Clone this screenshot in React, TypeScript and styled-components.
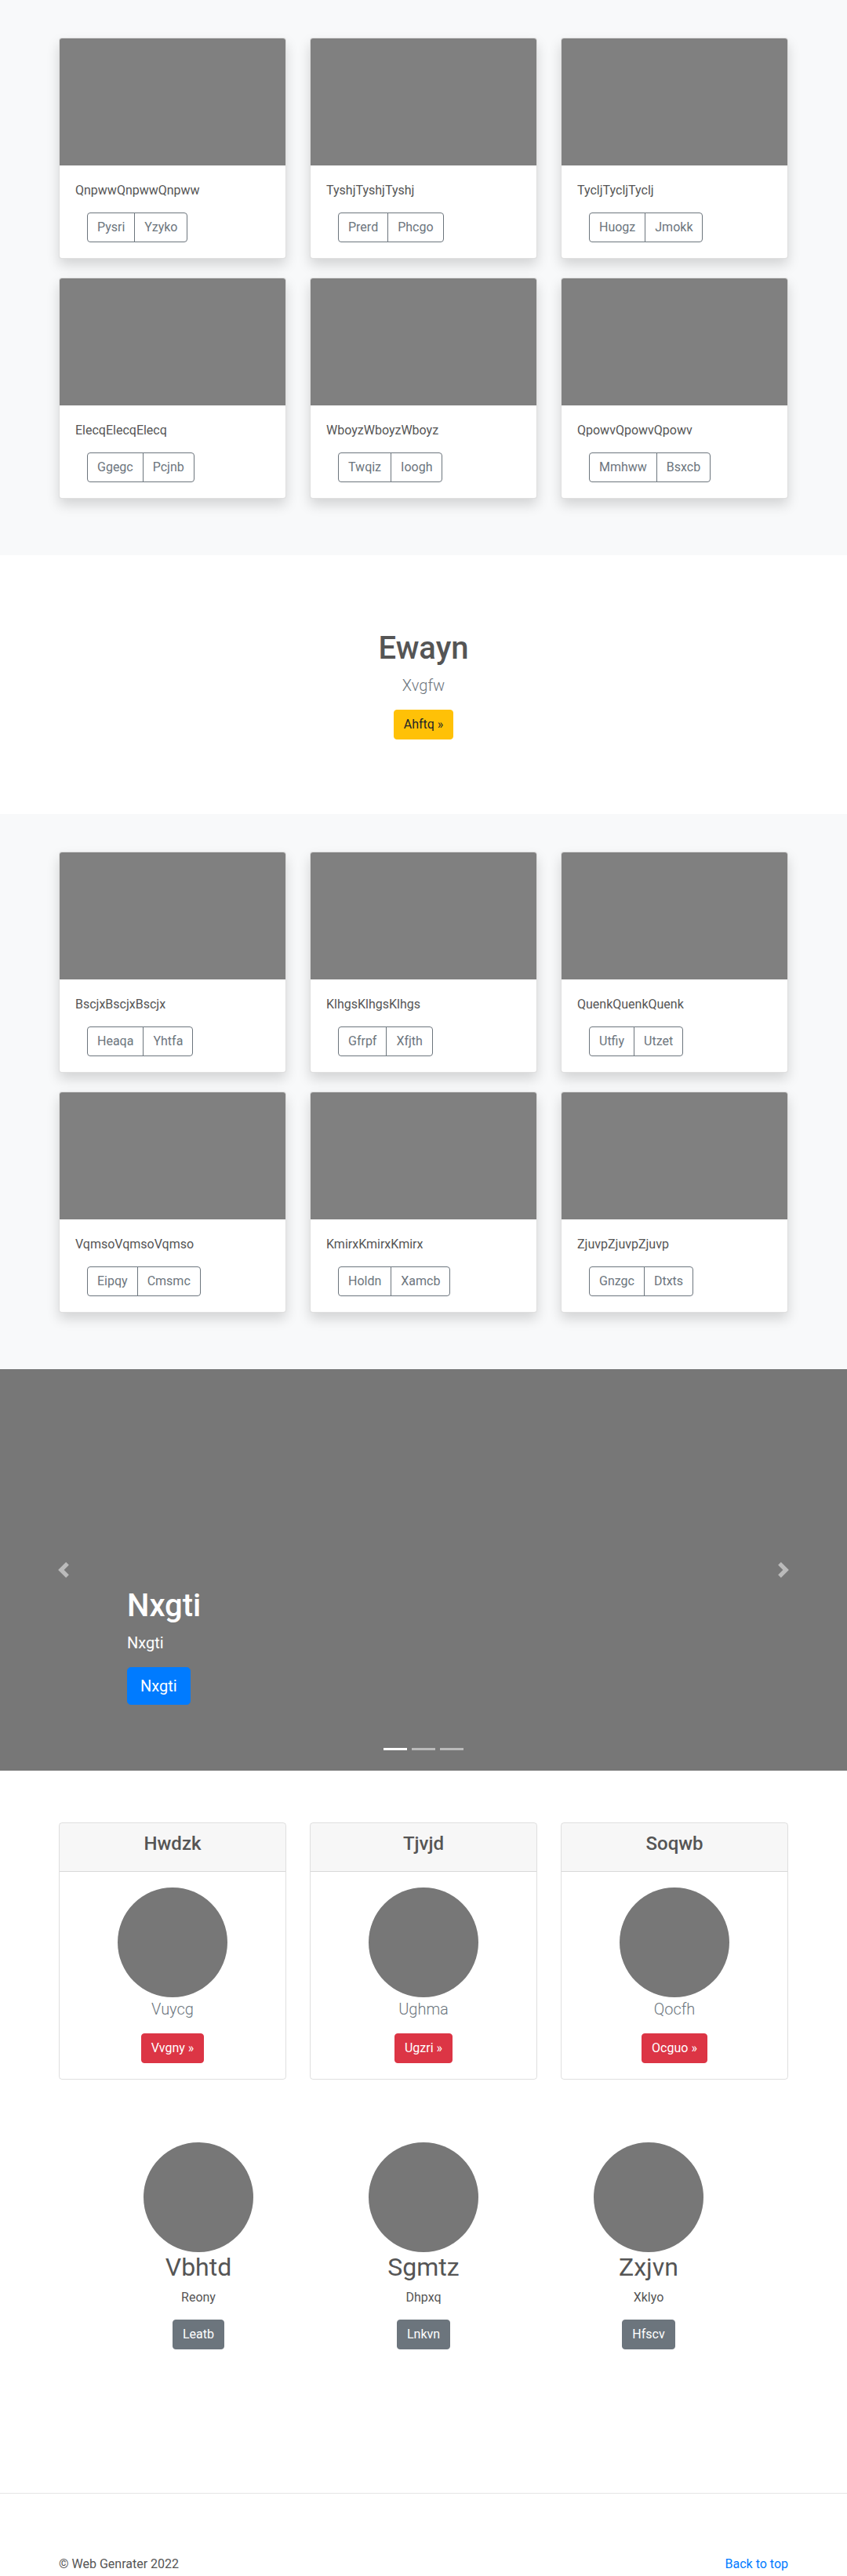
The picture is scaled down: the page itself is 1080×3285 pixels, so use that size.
import styled, { createGlobalStyle } from 'styled-components';

const GlobalStyle = createGlobalStyle`
  html, body {
    margin: 0;
    padding: 0;
  }
  body {
    font-family: Roboto, "Noto Sans", Arial, sans-serif;
    font-size: 16px;
    line-height: 1.5;
    color: #555;
    background: #fff;
  }
  * {
    box-sizing: border-box;
  }
`;

const albumOne = [
  { title: 'QnpwwQnpwwQnpww', a: 'Pysri', b: 'Yzyko' },
  { title: 'TyshjTyshjTyshj', a: 'Prerd', b: 'Phcgo' },
  { title: 'TycljTycljTyclj', a: 'Huogz', b: 'Jmokk' },
  { title: 'ElecqElecqElecq', a: 'Ggegc', b: 'Pcjnb' },
  { title: 'WboyzWboyzWboyz', a: 'Twqiz', b: 'Ioogh' },
  { title: 'QpowvQpowvQpowv', a: 'Mmhww', b: 'Bsxcb' },
];

const albumTwo = [
  { title: 'BscjxBscjxBscjx', a: 'Heaqa', b: 'Yhtfa' },
  { title: 'KlhgsKlhgsKlhgs', a: 'Gfrpf', b: 'Xfjth' },
  { title: 'QuenkQuenkQuenk', a: 'Utfiy', b: 'Utzet' },
  { title: 'VqmsoVqmsoVqmso', a: 'Eipqy', b: 'Cmsmc' },
  { title: 'KmirxKmirxKmirx', a: 'Holdn', b: 'Xamcb' },
  { title: 'ZjuvpZjuvpZjuvp', a: 'Gnzgc', b: 'Dtxts' },
];

const pricing = [
  { head: 'Hwdzk', text: 'Vuycg', cta: 'Vvgny' },
  { head: 'Tjvjd', text: 'Ughma', cta: 'Ugzri' },
  { head: 'Soqwb', text: 'Qocfh', cta: 'Ocguo' },
];

const people = [
  { name: 'Vbhtd', text: 'Reony', cta: 'Leatb' },
  { name: 'Sgmtz', text: 'Dhpxq', cta: 'Lnkvn' },
  { name: 'Zxjvn', text: 'Xklyo', cta: 'Hfscv' },
];

const Container = styled.div`
  width: 960px;
  margin: 0 auto;
  padding: 0 15px;
`;

const Album = styled.section`
  background: #f8f9fa;
  padding: 48px 0 72px;
`;

const Grid = styled.div`
  display: grid;
  grid-template-columns: repeat(3, 290px);
  column-gap: 30px;
  row-gap: 24px;
`;

const Card = styled.div`
  background: #fff;
  border: 1px solid rgba(0, 0, 0, 0.125);
  border-radius: 4px;
  overflow: hidden;
  box-shadow: 0 8px 16px rgba(0, 0, 0, 0.15);
`;

const Thumb = styled.div`
  height: 162px;
  background: #808080;
`;

const CardBody = styled.div`
  padding: 20px;
`;

const CardText = styled.p`
  margin: 0 0 16px;
  line-height: 24px;
`;

const BtnGroup = styled.div`
  display: inline-flex;
  margin-left: 15px;
`;

const OutlineBtn = styled.button`
  font: inherit;
  font-size: 16px;
  line-height: 24px;
  padding: 6px 12px;
  color: #6c757d;
  background: transparent;
  border: 1px solid #6c757d;
  border-radius: 0;
  &:first-child {
    border-radius: 4px 0 0 4px;
  }
  &:last-child {
    margin-left: -1px;
    border-radius: 0 4px 4px 0;
  }
`;

const Hero = styled.section`
  padding: 95px 0;
  text-align: center;
`;

const HeroTitle = styled.h1`
  margin: 0 0 8px;
  font-size: 40px;
  font-weight: 500;
  line-height: 1.2;
  color: #555;
`;

const Lead = styled.p`
  margin: 0 0 16px;
  font-size: 20px;
  font-weight: 300;
  line-height: 30px;
  color: #6c757d;
`;

const Btn = styled.a<{ $bg: string; $fg: string; $lg?: boolean }>`
  display: inline-block;
  font-size: ${(p) => (p.$lg ? '20px' : '16px')};
  line-height: ${(p) => (p.$lg ? '30px' : '24px')};
  padding: ${(p) => (p.$lg ? '8px 16px' : '6px 12px')};
  border: 1px solid ${(p) => p.$bg};
  border-radius: ${(p) => (p.$lg ? '4.8px' : '4px')};
  background: ${(p) => p.$bg};
  color: ${(p) => p.$fg};
  text-decoration: none;
`;

const Carousel = styled.div`
  position: relative;
  height: 512px;
  background: #777;
  overflow: hidden;
`;

const Caption = styled.div`
  position: absolute;
  left: 15%;
  right: 15%;
  bottom: 48px;
  padding: 20px 0;
  color: #fff;
  text-align: left;
`;

const CaptionTitle = styled.h1`
  margin: 0 0 8px;
  font-size: 40px;
  font-weight: 500;
  line-height: 1.2;
`;

const CaptionText = styled.p<{ $big?: boolean }>`
  margin: 0 0 16px;
  font-size: ${(p) => (p.$big ? '20px' : '16px')};
  line-height: ${(p) => (p.$big ? '30px' : '24px')};
`;

const Control = styled.span<{ $side: 'left' | 'right' }>`
  position: absolute;
  top: 0;
  bottom: 0;
  ${(p) => p.$side}: 0;
  width: 15%;
  display: flex;
  align-items: center;
  justify-content: center;
  opacity: 0.5;
`;

const Indicators = styled.ol`
  position: absolute;
  left: 0;
  right: 0;
  bottom: 0;
  margin: 0 0 16px;
  padding: 0;
  list-style: none;
  display: flex;
  justify-content: center;
`;

const Indicator = styled.li<{ $active?: boolean }>`
  width: 30px;
  height: 23px;
  margin: 0 3px;
  border-top: 10px solid transparent;
  border-bottom: 10px solid transparent;
  background: #fff;
  background-clip: padding-box;
  opacity: ${(p) => (p.$active ? 1 : 0.5)};
`;

const PricingWrap = styled.div`
  margin-top: 66px;
`;

const PriceCard = styled.div`
  border: 1px solid rgba(0, 0, 0, 0.125);
  border-radius: 4px;
  overflow: hidden;
  text-align: center;
`;

const PriceHead = styled.div`
  background: rgba(0, 0, 0, 0.03);
  border-bottom: 1px solid rgba(0, 0, 0, 0.125);
  padding: 12px 20px;
`;

const PriceTitle = styled.h4`
  margin: 0 0 8px;
  font-size: 24px;
  font-weight: 500;
  line-height: 1.2;
`;

const Circle = styled.div`
  width: 140px;
  height: 140px;
  border-radius: 50%;
  background: #777;
  margin: 0 auto;
`;

const Marketing = styled.div`
  margin-top: 80px;
  display: grid;
  grid-template-columns: repeat(3, 287px);
  justify-content: center;
  text-align: center;
`;

const PersonName = styled.h2`
  margin: 0 0 8px;
  font-size: 32px;
  font-weight: 400;
  line-height: 1.2;
`;

const PersonText = styled.p`
  margin: 0 0 16px;
`;

const Divider = styled.hr`
  margin: 183px 0 0;
  border: 0;
  border-top: 1px solid #e5e5e5;
  height: 0;
`;

const Footer = styled.footer`
  padding-top: 78px;
  display: flex;
  justify-content: space-between;
`;

const FooterText = styled.p`
  margin: 0;
  line-height: 24px;
`;

const FooterLink = styled.a`
  color: #007bff;
  text-decoration: none;
`;

const Chevron = ({ dir }: { dir: 'prev' | 'next' }) => (
  <svg width="20" height="20" viewBox="0 0 8 8" fill="#fff">
    <path
      d={
        dir === 'prev'
          ? 'M5.25 0l-4 4 4 4 1.5-1.5L4.25 4l2.5-2.5L5.25 0z'
          : 'M2.75 0l-1.5 1.5L3.75 4l-2.5 2.5L2.75 8l4-4-4-4z'
      }
    />
  </svg>
);

type AlbumItem = { title: string; a: string; b: string };

const AlbumSection = ({ items }: { items: AlbumItem[] }) => (
  <Album>
    <Container>
      <Grid>
        {items.map((it) => (
          <Card key={it.title}>
            <Thumb />
            <CardBody>
              <CardText>{it.title}</CardText>
              <BtnGroup>
                <OutlineBtn>{it.a}</OutlineBtn>
                <OutlineBtn>{it.b}</OutlineBtn>
              </BtnGroup>
            </CardBody>
          </Card>
        ))}
      </Grid>
    </Container>
  </Album>
);

export default function App() {
  return (
    <>
      <GlobalStyle />
      <AlbumSection items={albumOne} />

      <Hero>
        <HeroTitle>Ewayn</HeroTitle>
        <Lead>Xvgfw</Lead>
        <Btn $bg="#ffc107" $fg="#212529">Ahftq »</Btn>
      </Hero>

      <AlbumSection items={albumTwo} />

      <Carousel>
        <Caption>
          <CaptionTitle>Nxgti</CaptionTitle>
          <CaptionText $big>Nxgti</CaptionText>
          <CaptionText>
            <Btn $bg="#007bff" $fg="#fff" $lg>Nxgti</Btn>
          </CaptionText>
        </Caption>
        <Control $side="left">
          <Chevron dir="prev" />
        </Control>
        <Control $side="right">
          <Chevron dir="next" />
        </Control>
        <Indicators>
          <Indicator $active />
          <Indicator />
          <Indicator />
        </Indicators>
      </Carousel>

      <Container>
        <PricingWrap>
          <Grid>
            {pricing.map((p) => (
              <PriceCard key={p.head}>
                <PriceHead>
                  <PriceTitle>{p.head}</PriceTitle>
                </PriceHead>
                <CardBody>
                  <Circle />
                  <Lead>{p.text}</Lead>
                  <Btn $bg="#dc3545" $fg="#fff">{p.cta} »</Btn>
                </CardBody>
              </PriceCard>
            ))}
          </Grid>
        </PricingWrap>

        <Marketing>
          {people.map((p) => (
            <div key={p.name}>
              <Circle />
              <PersonName>{p.name}</PersonName>
              <PersonText>{p.text}</PersonText>
              <Btn $bg="#6c757d" $fg="#fff">{p.cta}</Btn>
            </div>
          ))}
        </Marketing>
      </Container>

      <Divider />
      <Container>
        <Footer>
          <FooterText>© Web Genrater 2022</FooterText>
          <FooterText>
            <FooterLink href="#">Back to top</FooterLink>
          </FooterText>
        </Footer>
      </Container>
    </>
  );
}
